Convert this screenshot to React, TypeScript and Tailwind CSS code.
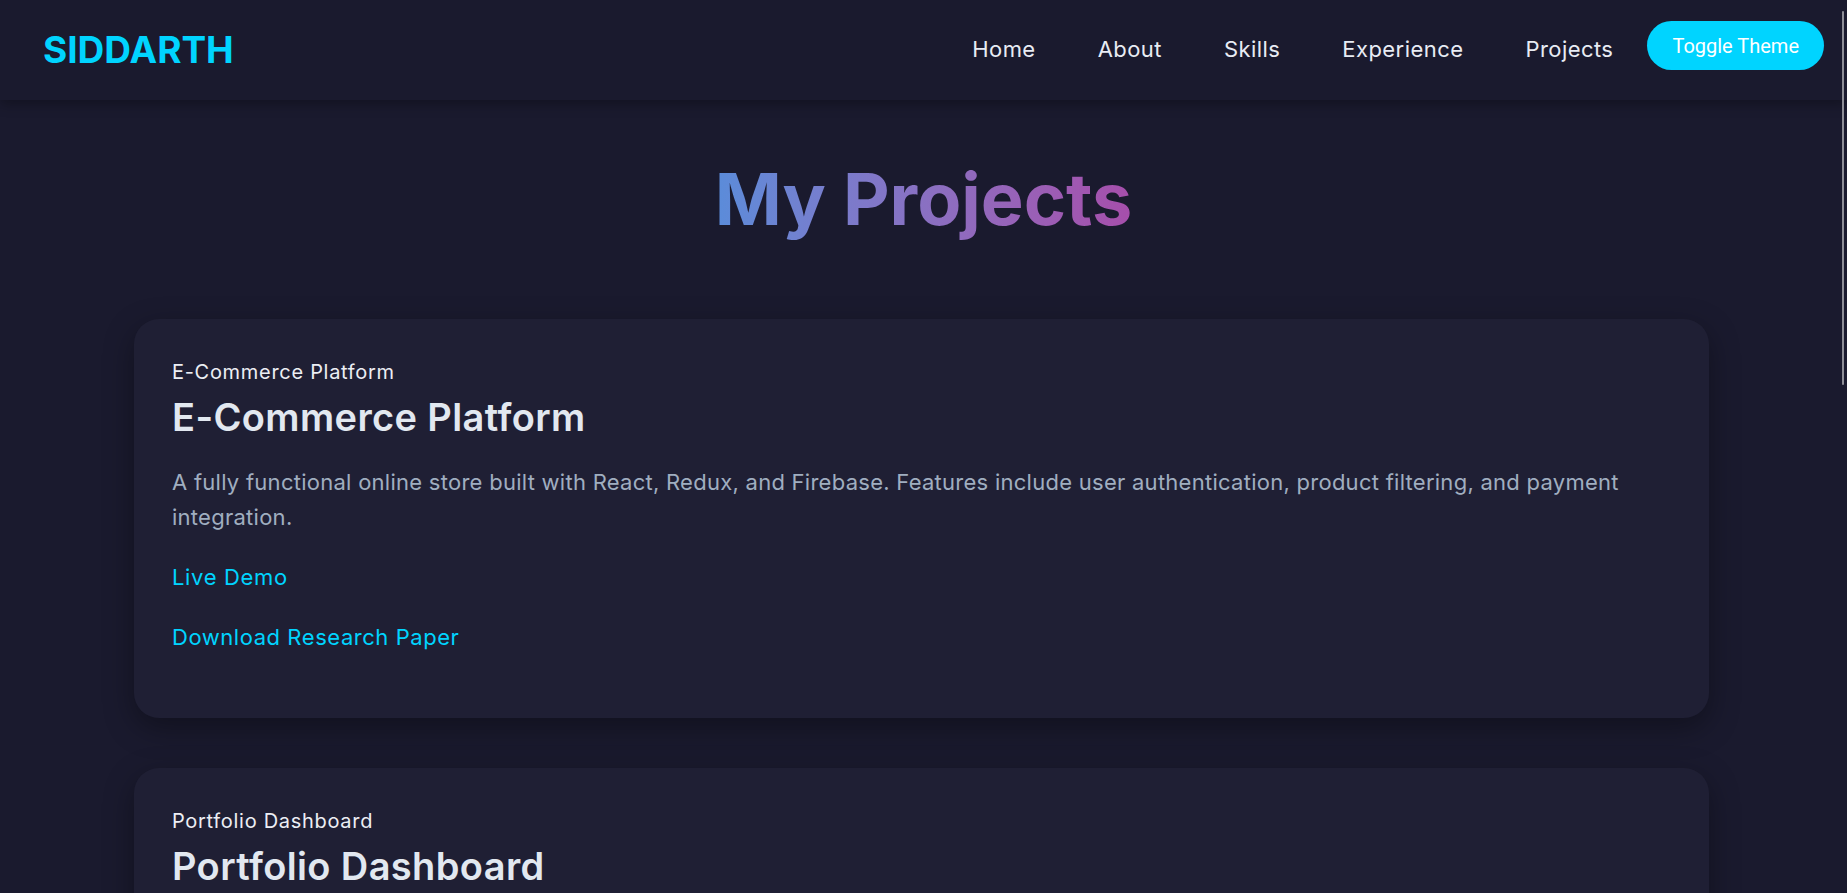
const links = ['Home', 'About', 'Skills', 'Experience', 'Projects'];

const projects = [
  {
    title: 'E-Commerce Platform',
    desc: 'A fully functional online store built with React, Redux, and Firebase. Features include user authentication, product filtering, and payment integration.',
  },
  {
    title: 'Portfolio Dashboard',
    desc: 'An analytics dashboard for tracking investments with real-time charts, alerts and a responsive layout built with React and Chart.js.',
  },
];

function ProjectCard({ title, desc }: { title: string; desc: string }) {
  return (
    <div className="ml-[134px] w-[1575px] rounded-[25px] bg-[#1f1f34] px-[38px] pt-[38px] pb-[38px] shadow-[0_10px_30px_rgba(0,0,0,0.35)] mb-[50px]">
      <p className="text-[20px] leading-[30px] text-[#eceef4] tracking-[0.035em]">{title}</p>
      <h3 className="mt-[8px] text-[38px] leading-[44px] font-semibold text-[#e2e8f0] tracking-[0.01em]">{title}</h3>
      <p className="mt-[26px] text-[22px] leading-[35px] text-[#a0aec0] tracking-[0.012em]">{desc}</p>
      <a className="block mt-[25px] mb-[25px] text-[22px] leading-[35px] text-[#00d4ff] tracking-[0.03em]">Live Demo</a>
      <a className="block mb-[25px] text-[22px] leading-[35px] text-[#00d4ff] tracking-[0.025em]">Download Research Paper</a>
    </div>
  );
}

export default function App() {
  return (
    <div className="relative h-[893px] overflow-hidden bg-[#1a1a2e] font-['Inter','Open_Sans',sans-serif]">
      <header className="relative z-10 flex h-[100px] items-center justify-between bg-[#1a1a2e] pb-[9px] pl-[43px] pr-[23px] shadow-[0_4px_12px_rgba(0,0,0,0.3)]">
        <div className="pt-[8px] text-[37px] font-bold leading-none text-[#00d4ff]">SIDDARTH</div>
        <nav className="flex items-center">
          <ul className="flex items-center gap-[62px] pt-[8px]">
            {links.map((l) => (
              <li key={l} className="text-[22px] text-[#e8ecf4] tracking-[0.02em]">
                {l}
              </li>
            ))}
          </ul>
          <button className="ml-[34px] h-[49px] rounded-full bg-[#00d4ff] px-[25px] font-['Roboto',sans-serif] text-[20px] text-white">
            Toggle Theme
          </button>
        </nav>
      </header>

      <main className="pt-[57px]">
        <h2 className="mb-[78px] text-center text-[72px] font-bold leading-[84px]">
          <span className="inline-block bg-gradient-to-r from-[#5a8cda] to-[#a64eab] bg-clip-text text-transparent">
            My Projects
          </span>
        </h2>
        {projects.map((p) => (
          <ProjectCard key={p.title} title={p.title} desc={p.desc} />
        ))}
      </main>

      <div className="absolute right-[3px] top-[11px] z-20 h-[374px] w-[2px] rounded-full bg-[#8f8f98]" />
    </div>
  );
}
